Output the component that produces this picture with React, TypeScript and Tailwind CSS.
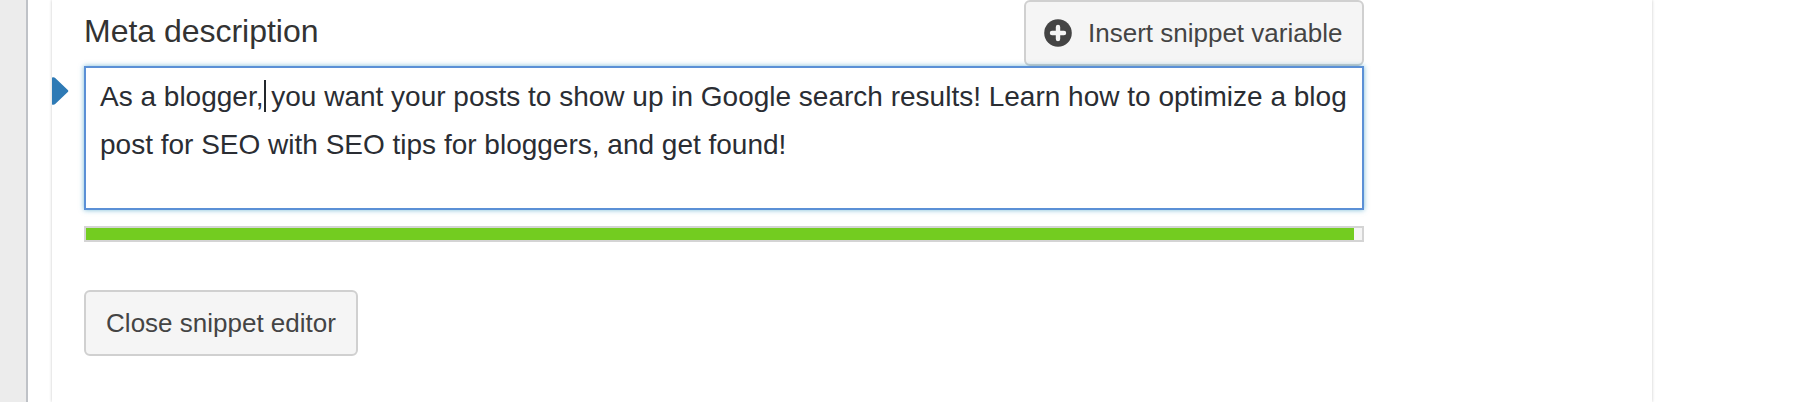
const DESCRIPTION = {
    beforeCaret: 'As a blogger,',
    afterCaret: ' you want your posts to show up in Google search results! Learn how to optimize a blog',
    secondLine: 'post for SEO with SEO tips for bloggers, and get found!',
}

const PROGRESS = { value: 1268, max: 1276 }

function PlusCircle() {
    return (
        <svg className="w-7 h-7 shrink-0" viewBox="0 0 28 28" aria-hidden="true">
            <circle cx="14" cy="14" r="13.8" fill="#444" />
            <path d="M14 8v12M8 14h12" stroke="#f5f5f5" strokeWidth="4.4" strokeLinecap="round" />
        </svg>
    )
}

function FieldMarker() {
    return (
        <svg className="w-[17px] h-7 mt-[11px] shrink-0" viewBox="0 0 17 28" aria-hidden="true">
            <path d="M0 0.4Q2 -0.3 3.2 0.9L15.8 13Q16.8 14 15.8 15L3.2 27.1Q2 28.3 0 27.6Z" fill="#2e7ab5" />
        </svg>
    )
}

export default function App() {
    return (
        <div className="flex w-[1796px] h-[402px] overflow-hidden bg-white font-['Liberation_Sans',Arial,sans-serif]">
            {/* Page gutter */}
            <div className="w-7 shrink-0 bg-[#ececec] border-r-2 border-[#bfc2c7]" />

            {/* Editor panel */}
            <section className="ml-6 w-[1600px] shrink-0 bg-white shadow-[0_0_3px_rgba(0,0,0,0.22)]">
                <div className="flex justify-between h-[66px] pl-8 pr-72">
                    <label className="text-[32px] leading-[62px] tracking-[-0.02px] text-[#333]">Meta description</label>
                    <button className="flex items-center w-[340px] h-[66px] pl-[18px] rounded-[6px] border-2 border-[#d0d0d0] bg-[#f5f5f5] text-[26px] text-[#444] whitespace-nowrap">
                        <PlusCircle />
                        <span className="ml-4">Insert snippet variable</span>
                    </button>
                </div>

                <div className="flex">
                    <FieldMarker />
                    <div className="relative ml-[15px] w-[1280px] h-36 px-3.5 pt-[5px] border-2 border-[#5b90d6] bg-white shadow-[0_0_5px_rgba(30,140,190,0.6)] text-[28px] leading-[48px] text-[#2a2d33] whitespace-pre">
                        <p>
                            {DESCRIPTION.beforeCaret}
                            <span className="inline-block w-0.5 h-8 ml-px -mr-[3px] align-[-6px] bg-[#23282d]" />
                            {DESCRIPTION.afterCaret}
                        </p>
                        <p>{DESCRIPTION.secondLine}</p>
                    </div>
                </div>

                {/* Length meter */}
                <div className="mt-4 ml-8 w-[1280px] h-4 border-2 border-[#d4d4d4] bg-[#f5f5f5]">
                    <div className="h-full bg-[#73cc20]" style={{ width: `${(PROGRESS.value / PROGRESS.max) * 100}%` }} />
                </div>

                <button className="mt-12 ml-8 w-[274px] h-[66px] rounded-[6px] border-2 border-[#d0d0d0] bg-[#f5f5f5] text-[26px] text-[#444] whitespace-nowrap">
                    Close snippet editor
                </button>
            </section>
        </div>
    )
}
